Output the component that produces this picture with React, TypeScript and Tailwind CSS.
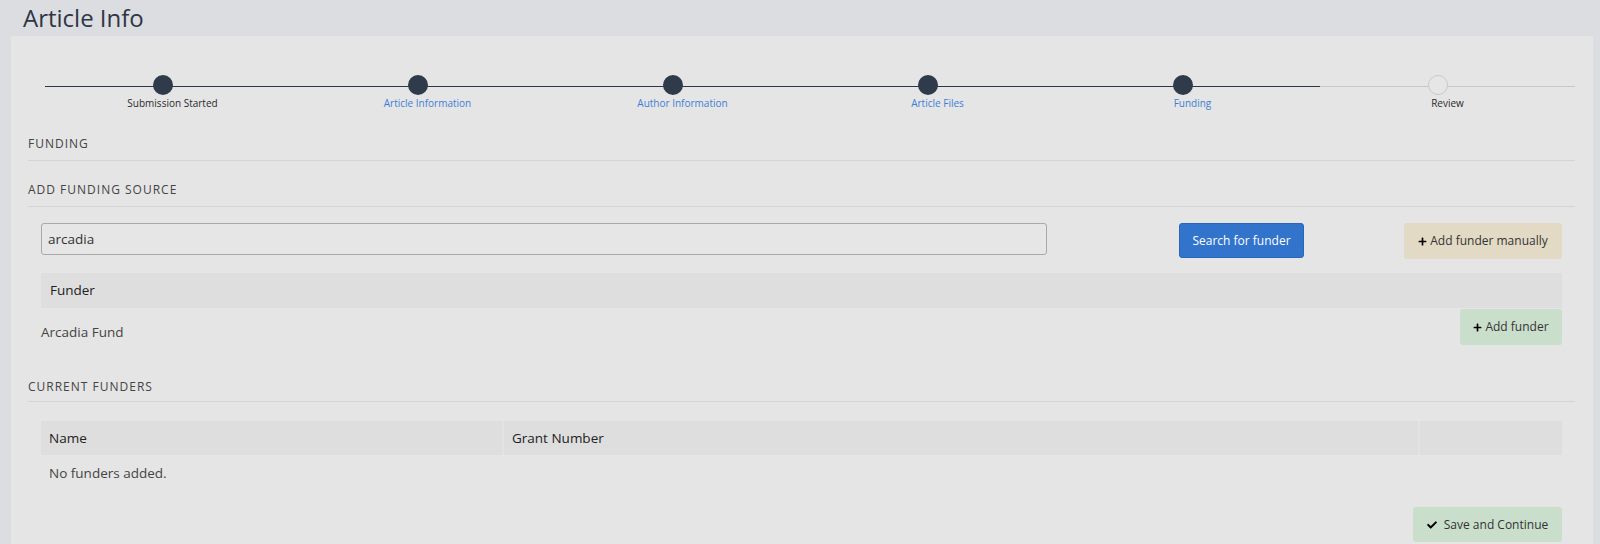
import { FaPlus, FaCheck } from "react-icons/fa";

const steps = [
  { label: "Submission Started", done: true, link: false },
  { label: "Article Information", done: true, link: true },
  { label: "Author Information", done: true, link: true },
  { label: "Article Files", done: true, link: true },
  { label: "Funding", done: true, link: true },
  { label: "Review", done: false, link: false },
];

const Stepper = () => (
  <div className="ml-[17px] flex">
    {steps.map((s) => (
      <div key={s.label} className="flex-1 flex flex-col items-center">
        <div className="relative w-full h-5 flex justify-center">
          <div
            className={
              s.done
                ? "absolute left-0 right-0 top-[11px] h-px bg-[#2d3644]"
                : "absolute left-0 right-0 top-[11px] h-px bg-[#c6c6c6]"
            }
          />
          <div
            className={
              s.done
                ? "relative -translate-x-[10px] w-5 h-5 rounded-full bg-[#2f3a4a]"
                : "relative -translate-x-[10px] w-5 h-5 rounded-full bg-[#e6e6e6] border border-[#c9c9c9]"
            }
          />
        </div>
        <span
          className={
            s.link
              ? "mt-px text-[10px] leading-[14px] text-[#3c7fd6]"
              : "mt-px text-[10px] leading-[14px] text-[#2a2a2a]"
          }
        >
          {s.label}
        </span>
      </div>
    ))}
  </div>
);

const SectionTitle = ({ children, className }: { children: string; className: string }) => (
  <div
    className={
      "border-b border-[#d4d4d4] text-[12px] leading-4 tracking-[1px] text-[#444] " + className
    }
  >
    {children}
  </div>
);

export default function App() {
  return (
    <div
      className="min-h-screen bg-[#dcdde1] pb-4"
      style={{ fontFamily: '"Open Sans", "Noto Sans", sans-serif' }}
    >
      <div className="h-[36px] pl-[23px] pt-[3px]">
        <h1 className="text-[24px] leading-[30px] text-[#2e3645]">Article Info</h1>
      </div>
      <div className="ml-[11px] mr-[7px] bg-[#e5e5e5] pl-[17px] pr-[18px] pt-[39px] pb-[10px]">
        <Stepper />

        <SectionTitle className="mt-[26px] pb-[8px]">FUNDING</SectionTitle>
        <SectionTitle className="mt-[21px] pb-[8px]">ADD FUNDING SOURCE</SectionTitle>

        <div className="px-[13px]">
          <div className="mt-[16px] flex items-start">
            <input
              defaultValue="arcadia"
              className="w-[1006px] h-[32px] rounded-[3px] border border-[#a9a9a9] bg-[#e6e6e6] px-[6px] text-[13.5px] text-[#333] outline-none"
            />
            <button className="ml-[132px] w-[125px] h-[35px] rounded-[3px] bg-[#3273cc] border border-[#2a66b8] text-[12px] text-white">
              Search for funder
            </button>
            <button className="ml-auto w-[158px] h-[36px] rounded-[3px] bg-[#e3dac6] text-[12px] text-[#333] flex items-center justify-center gap-[3px]">
              <FaPlus className="text-[9px] text-black" />
              Add funder manually
            </button>
          </div>

          <div className="mt-[14px] h-[35px] bg-[#dedede] flex items-center pl-[9px] text-[13.5px] text-[#222]">
            Funder
          </div>
          <div className="flex items-start">
            <span className="pt-[15px] text-[13.5px] leading-[18px] text-[#444]">Arcadia Fund</span>
            <button className="ml-auto mt-px w-[102px] h-[36px] rounded-[3px] bg-[#c9dfcc] text-[12px] text-[#333] flex items-center justify-center gap-[3px]">
              <FaPlus className="text-[9px] text-black" />
              Add funder
            </button>
          </div>
        </div>

        <SectionTitle className="mt-[34px] pb-[6px]">CURRENT FUNDERS</SectionTitle>

        <div className="px-[13px]">
          <div className="mt-[19px] h-[34px] flex text-[13.5px] text-[#222]">
            <div className="w-[461px] bg-[#dedede] flex items-center pl-[8px]">Name</div>
            <div className="w-[916px] bg-[#dedede] border-l-2 border-[#e3e3e3] flex items-center pl-[8px]">
              Grant Number
            </div>
            <div className="flex-1 bg-[#dedede] border-l-2 border-[#e3e3e3]" />
          </div>
          <div className="pt-[9px] pl-[8px] text-[13.5px] leading-[18px] text-[#444]">No funders added.</div>
          <div className="mt-[25px] flex justify-end">
            <button className="w-[149px] h-[35px] rounded-[3px] bg-[#c9dfcc] text-[12px] text-[#333] flex items-center justify-center gap-[7px]">
              <FaCheck className="text-[10px] text-black" />
              Save and Continue
            </button>
          </div>
        </div>
      </div>
    </div>
  );
}
